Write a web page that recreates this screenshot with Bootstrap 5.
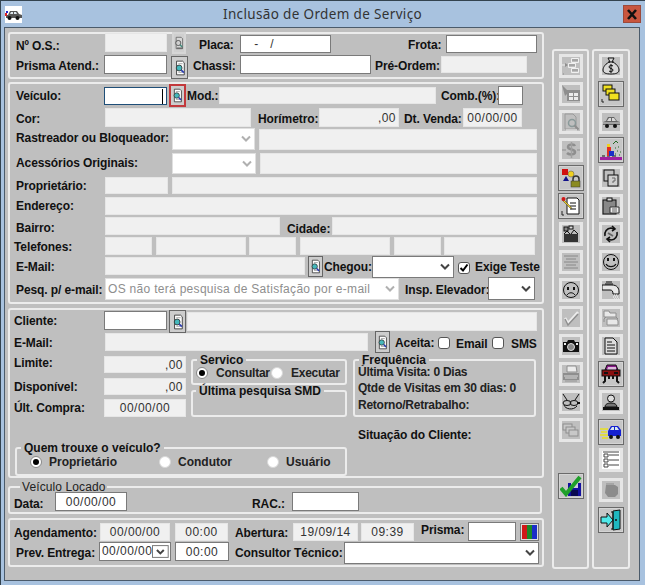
<!DOCTYPE html>
<html lang="pt-BR">
<head>
  <meta charset="UTF-8">
  <title>Inclusão de Ordem de Serviço</title>
  <meta name="viewport" content="width=device-width, initial-scale=1">
  <link href="https://cdn.jsdelivr.net/npm/bootstrap@5.3.0/dist/css/bootstrap.min.css" rel="stylesheet">
  <style>
    html, body { margin: 0; background: #a8c2df; }
    body { font-family: "Liberation Sans", Arial, sans-serif; font-size: 12px; color: #111; }

    /* janela */
    .janela { width: 645px; height: 585px; border-left: 1px solid #33434f; border-top: 1px solid #33434f; overflow: hidden; }
    .barra { height: 26px; padding: 0 4px 0 4px; }
    .titulo { font-family: "Noto Sans", "Open Sans", sans-serif; font-size: 13.5px; letter-spacing: .35px; color: #333; }
    .fecha { width: 18px; height: 18px; background: #c8563f; border: 1px solid #9c4a3c; border-radius: 0; padding: 0; line-height: 0; }
    .fecha:hover { background: #c8563f; border-color: #9c4a3c; }
    .cliente { width: 636px; height: 554px; margin-left: 3px; background: #bfbfbf; border: 1px solid #4b5b6b; padding: 4px 0 0 3px; }

    /* paineis e grupos */
    .painel { width: 536px; border: 2px solid #ececec; border-radius: 3px; }
    .grupo { border: 2px solid #ececec; border-radius: 3px; padding: 0; margin: 0; min-width: 0; }
    .grupo legend { float: none; width: auto; font-size: 12px; font-weight: 700; line-height: 12px; margin: 0 0 0 3px; padding: 0 3px; }
    .grupo legend.lg1 { margin-left: 1px; }
    .grupo legend.lg4 { margin-left: 4px; }
    .grupo legend.fino { font-weight: 400; margin-left: 6px; padding: 0 2px; letter-spacing: .1px; color: #222; }
    .pl4 { padding-left: 4px; }
    .pl6 { padding-left: 6px; }
    .pl3 { padding-left: 3px; }

    /* linhas do formulario */
    .lin > * { flex: none; }
    .rot { height: 18px; line-height: 20px; font-weight: 700; white-space: nowrap; letter-spacing: -.1px; }
    .txt { color: #222; font-weight: 700; line-height: 16px; white-space: nowrap; }
    .txt.baixo { line-height: 12px; }
    .aperta { letter-spacing: -.25px; }
    .campo { padding: 0 2px; font-size: 12px; line-height: 14px; border: 1px solid #7a7a7a; border-radius: 0; background: #fff; color: #333; box-shadow: none; letter-spacing: .45px; }
    .campo:disabled { background: #f0f0f0; border-color: #e6e6e6; opacity: 1; color: #333; }
    .centro { text-align: center; }
    .dir { text-align: right; }
    .foco { border-color: #1f4f78; background: #fff linear-gradient(#000, #000) no-repeat right 3px center / 1px 15px; }
    .sel { padding: 0 2px; font-size: 12px; border: 1px solid #7a7a7a; border-radius: 0; color: #888; background-color: #fff; background-position: right 3px center; background-size: 10px 8px; letter-spacing: .3px; box-shadow: none;
      background-image: url("data:image/svg+xml,%3csvg xmlns='http://www.w3.org/2000/svg' viewBox='0 0 10 8'%3e%3cpath fill='none' stroke='%23444' stroke-width='2' d='M1 1.5l4 4 4-4'/%3e%3c/svg%3e"); }
    .sel:disabled { background-color: #fff; border-color: #e0e0e0; color: #8e8e8e; opacity: 1;
      background-image: url("data:image/svg+xml,%3csvg xmlns='http://www.w3.org/2000/svg' viewBox='0 0 10 8'%3e%3cpath fill='none' stroke='%23b0b0b0' stroke-width='2' d='M1 1.5l4 4 4-4'/%3e%3c/svg%3e"); }
    .marc { margin: 0; flex: none; width: 12px; height: 12px; border: 1px solid #555; border-radius: 0; background-color: #fff; box-shadow: none; }
    .marc:checked[type=checkbox] { background-color: #fff; border-color: #555; background-size: 10px;
      --bs-form-check-bg-image: url("data:image/svg+xml,%3csvg xmlns='http://www.w3.org/2000/svg' viewBox='0 0 10 10'%3e%3cpath fill='none' stroke='%23000' stroke-width='2' d='M1.5 5l2.5 2.5 4.5-6'/%3e%3c/svg%3e"); }
    .marc[type=radio] { border: 1px solid #d8d8d8; border-radius: 50%; }
    .marc:checked[type=radio] { background-color: #fff; border-color: #888; background-size: 12px;
      --bs-form-check-bg-image: url("data:image/svg+xml,%3csvg xmlns='http://www.w3.org/2000/svg' viewBox='0 0 12 12'%3e%3ccircle cx='6' cy='6' r='3' fill='%23000'/%3e%3c/svg%3e"); }

    /* botoes pequenos */
    .lupa { padding: 0; border: 1px solid #666; border-radius: 0; background: #cdcdcd; line-height: 0; }
    .lupa:hover { background: #cdcdcd; border-color: #666; }
    .lupa.sem { border: 2px solid #d6d6d6; background: #cfcfcf; }
    .lupa.red { border: 2px solid #c2393c; }
    .cores { padding: 0; border: 1px solid #777; border-radius: 0; background: #ddd; line-height: 0; }
    .seta { margin: 2px 1px 2px auto; width: 17px; height: 13px; display: block; }
    .datacx { padding: 0 0 0 2px; font-size: 12px; line-height: 17px; border: 1px solid #7a7a7a; background: #fff; color: #333; letter-spacing: .45px; }

    /* barras de ferramentas */
    .ferrs { margin: 17px 0 0 8px; }
    .coluna { height: 520px; border: 2px solid #ececec; border-radius: 3px; padding-top: 1px; }
    .vaga { height: 28px; }
    .ferr { width: 24px; height: 24px; padding: 0; border: 3px solid #e6e6e6; border-radius: 0; background: #bfbfbf; line-height: 0; }
    .ferr:hover { background: #bfbfbf; border-color: #e6e6e6; }
    .ferr.ativo { width: 26px; height: 26px; border: 1px solid #6a6a6a; background: #c6c6c6; box-shadow: inset 0 0 0 1px #d4d4d4; }
    .ferr.ativo:hover { border-color: #6a6a6a; background: #c6c6c6; }

    /* medidas */
    .w12{width:12px}.w14{width:14px}.w15{width:15px}.w17{width:17px}.w19{width:19px}.w25{width:25px}.w32{width:32px}.w36{width:36px}.w37{width:37px}.w38{width:38px}.w40{width:40px}.w41{width:41px}.w43{width:43px}.w45{width:45px}.w47{width:47px}.w48{width:48px}.w53{width:53px}.w54{width:54px}.w55{width:55px}.w57{width:57px}.w58{width:58px}.w59{width:59px}.w60{width:60px}.w61{width:61px}.w62{width:62px}.w63{width:63px}.w65{width:65px}.w66{width:66px}.w67{width:67px}.w70{width:70px}.w72{width:72px}.w80{width:80px}.w82{width:82px}.w83{width:83px}.w84{width:84px}.w86{width:86px}.w88{width:88px}.w89{width:89px}.w90{width:90px}.w91{width:91px}.w109{width:109px}.w110{width:110px}.w131{width:131px}.w146{width:146px}.w156{width:156px}.w175{width:175px}.w177{width:177px}.w183{width:183px}.w195{width:195px}.w200{width:200px}.w205{width:205px}.w217{width:217px}.w263{width:263px}.w277{width:277px}.w278{width:278px}.w294{width:294px}.w332{width:332px}.w350{width:350px}.w365{width:365px}.w432{width:432px}.w534{width:534px}
    .ml1{margin-left:1px}.ml2{margin-left:2px}.ml3{margin-left:3px}.ml4{margin-left:4px}.ml5{margin-left:5px}.ml6{margin-left:6px}.ml7{margin-left:7px}.ml8{margin-left:8px}.ml11{margin-left:11px}.ml13{margin-left:13px}.ml77{margin-left:77px}.ml125{margin-left:125px}.mln2{margin-left:-2px}
    .t1{margin-top:1px}.t2{margin-top:2px}.t3{margin-top:3px}.t4{margin-top:4px}.t5{margin-top:5px}.t8{margin-top:8px}.t25{margin-top:25px}.tn1{margin-top:-1px}.tn2{margin-top:-2px}.tn3{margin-top:-3px}
    .a16{height:16px}.a17{height:17px}.a18{height:18px}.a19{height:19px}.a20{height:20px}.a21{height:21px}.a22{height:22px}.a23{height:23px}.a24{height:24px}.a25{height:25px}.a31{height:31px}.a32{height:32px}.a33{height:33px}.a34{height:34px}.a59{height:59px}.a61{height:61px}.a63{height:63px}
    .mt3p{margin-top:3px}.mt4p{margin-top:4px}
  </style>
</head>
<body>

<svg width="0" height="0" class="position-absolute">
  <symbol id="lupa" viewBox="0 0 14 20">
    <path d="M3 2h7l2 2v14H3z" fill="#fff" stroke="#333"/>
    <path d="M5 5h5M5 15h5" stroke="#999"/>
    <circle cx="6" cy="10" r="3.400" fill="#45b8bc" stroke="#333"/>
    <path d="M8.500 12.500l3 3" stroke="#2a3cb0" stroke-width="2"/>
  </symbol>
  <symbol id="lupa0" viewBox="0 0 14 20">
    <path d="M3 2h7l2 2v14H3z" fill="#d8d8d8" stroke="#555"/>
    <circle cx="6" cy="10" r="3.600" fill="#cfcfcf" stroke="#333"/>
    <path d="M8.500 12.500l3 3" stroke="#3f8a7a" stroke-width="2"/>
    <path d="M4 17h8" stroke="#333"/>
  </symbol>
</svg>

<div class="janela">
  <div class="barra d-flex align-items-center">
    <svg width="17" height="17" viewBox="0 0 17 17">
      <rect width="17" height="17" fill="#fff"/>
      <path d="M3 9l2-4h7l2 3 3 1v3H1V9z" fill="#555"/>
      <path d="M6 6h2v2H5zM9 6h2l1 2H9z" fill="#dfe8ee"/>
      <rect x="0" y="7" width="2" height="3" fill="#d22"/>
      <rect x="1" y="5" width="2" height="2" fill="#22c"/>
      <circle cx="4.500" cy="12" r="2" fill="#111"/><circle cx="12.500" cy="12" r="2" fill="#111"/>
    </svg>
    <div class="titulo flex-grow-1 text-center">Inclusão de Ordem de Serviço</div>
    <button class="btn fecha d-flex align-items-center justify-content-center" aria-label="Fechar">
      <svg width="12" height="11" viewBox="0 0 12 11"><path d="M2 1l8 9M10 1l-8 9" stroke="#111" stroke-width="2.600"/></svg>
    </button>
  </div>

  <div class="cliente d-flex align-items-start">
    <div>
      <!-- identificacao da O.S. -->
      <div class="painel pl6">
        <div class="lin d-flex align-items-start a21">
          <span class="rot w89 t2">Nº O.S.:</span>
          <input class="form-control campo w62 a19 tn1" disabled>
          <button class="btn lupa sem ml5 w14 a22 tn2"><svg width="10" height="18"><use href="#lupa0"/></svg></button>
          <span class="rot ml13 w41 t1">Placa:</span>
          <input class="form-control campo w91 a18 t1" value="   -   /">
          <span class="rot ml77 w38 t1">Frota:</span>
          <input class="form-control campo w91 a18 t1">
        </div>
        <div class="lin d-flex align-items-start a22">
          <span class="rot w88 t1">Prisma Atend.:</span>
          <input class="form-control campo w63 a19">
          <button class="btn lupa ml4 w17 a23 t1"><svg width="12" height="18"><use href="#lupa"/></svg></button>
          <span class="rot ml5 w47 t1">Chassi:</span>
          <input class="form-control campo w131 a19">
          <span class="rot ml4 w66 t1">Pré-Ordem:</span>
          <input class="form-control campo w86 a17 t1" disabled>
        </div>
      </div>

      <!-- veiculo -->
      <div class="painel pl6 mt3p">
        <div class="lin d-flex align-items-start a24">
          <span class="rot w88 t2">Veículo:</span>
          <input class="form-control campo foco w63 a18 t3">
          <button class="btn lupa red ml2 w17 a23"><svg width="11" height="17"><use href="#lupa"/></svg></button>
          <span class="rot ml1 w32 t2">Mod.:</span>
          <input class="form-control campo w217 a17 t3" disabled>
          <span class="rot ml5 w57 t2">Comb.(%):</span>
          <input class="form-control campo w25 a19 t2">
        </div>
        <div class="lin d-flex align-items-start a20">
          <span class="rot w89 t1">Cor:</span>
          <input class="form-control campo w146 a19" disabled>
          <span class="rot ml7 w61 t1">Horímetro:</span>
          <input class="form-control campo dir w80 a19" disabled value=",00">
          <span class="rot ml5 w59 t1">Dt. Venda:</span>
          <input class="form-control campo centro w59 a19" disabled value="00/00/00">
        </div>
        <div class="lin d-flex align-items-start a25">
          <span class="rot w156">Rastreador ou Bloqueador:</span>
          <select class="form-select sel w83 a22" disabled></select>
          <input class="form-control campo ml4 w278 a21 t1" disabled>
        </div>
        <div class="lin d-flex align-items-start a24">
          <span class="rot w156">Acessórios Originais:</span>
          <select class="form-select sel w84 a21" disabled></select>
          <input class="form-control campo ml4 w277 a21" disabled>
        </div>
        <div class="lin d-flex align-items-start a20">
          <span class="rot w89 tn1">Proprietário:</span>
          <input class="form-control campo w63 a17" disabled>
          <input class="form-control campo ml4 w365 a17" disabled>
        </div>
        <div class="lin d-flex align-items-start a20">
          <span class="rot w89 tn1">Endereço:</span>
          <input class="form-control campo w432 a18" disabled>
        </div>
        <div class="lin d-flex align-items-start a20">
          <span class="rot w89 t1">Bairro:</span>
          <input class="form-control campo w175 a18" disabled>
          <span class="rot ml7 w45 t2">Cidade:</span>
          <input class="form-control campo w205 a18" disabled>
        </div>
        <div class="lin d-flex align-items-start a20">
          <span class="rot w91 mln2">Telefones:</span>
          <input class="form-control campo w47 a18" disabled>
          <input class="form-control campo ml4 w90 a18" disabled>
          <input class="form-control campo ml3 w47 a18" disabled>
          <input class="form-control campo ml4 w90 a18" disabled>
          <input class="form-control campo ml4 w47 a18" disabled>
          <input class="form-control campo ml3 w91 a18" disabled>
        </div>
        <div class="lin d-flex align-items-start a21">
          <span class="rot w89">E-Mail:</span>
          <input class="form-control campo w200 a18" disabled>
          <button class="btn lupa ml3 w15 a21 tn1"><svg width="11" height="17"><use href="#lupa"/></svg></button>
          <span class="rot ml1 w48">Chegou:</span>
          <select class="form-select sel w82 a22 tn1"></select>
          <input class="form-check-input marc w12 ml4 t5" type="checkbox" checked>
          <span class="rot ml5">Exige Teste</span>
        </div>
        <div class="lin d-flex align-items-start a24">
          <span class="rot w89 t2">Pesq. p/ e-mail:</span>
          <select class="form-select sel w294 a22" disabled><option>OS não terá pesquisa de Satisfação por e-mail</option></select>
          <span class="rot ml6 w83 t2">Insp. Elevador:</span>
          <select class="form-select sel w47 a23 tn1"></select>
        </div>
      </div>

      <!-- cliente -->
      <div class="painel pl4 mt4p">
        <div class="lin d-flex align-items-start a23">
          <span class="rot w90 t1">Cliente:</span>
          <input class="form-control campo w63 a19 t1">
          <button class="btn lupa ml2 w17 a23"><svg width="12" height="18"><use href="#lupa"/></svg></button>
          <input class="form-control campo ml1 w350 a19 t2" disabled>
        </div>
        <div class="lin d-flex align-items-start a23">
          <span class="rot w91">E-Mail:</span>
          <input class="form-control campo w263 a18" disabled>
          <button class="btn lupa ml7 w15 a22 tn2"><svg width="11" height="17"><use href="#lupa"/></svg></button>
          <span class="rot ml5 w43">Aceita:</span>
          <input class="form-check-input marc t4" type="checkbox">
          <span class="rot ml6 w36 t1">Email</span>
          <input class="form-check-input marc t4" type="checkbox">
          <span class="rot ml7 t1">SMS</span>
        </div>
        <div class="lin d-flex align-items-start a61">
          <div class="w177">
            <div class="lin d-flex align-items-start a22">
              <span class="rot w90 tn3">Limite:</span>
              <input class="form-control campo dir w82 a17" disabled value=",00">
            </div>
            <div class="lin d-flex align-items-start a21">
              <span class="rot w90 tn1">Disponível:</span>
              <input class="form-control campo dir w82 a17" disabled value=",00">
            </div>
            <div class="lin d-flex align-items-start">
              <span class="rot w90 tn1">Últ. Compra:</span>
              <input class="form-control campo centro w82 a18" disabled value="00/00/00">
            </div>
          </div>
          <div class="w156 tn2">
            <fieldset class="grupo a31 pl3">
              <legend class="lg1">Servico</legend>
              <div class="lin d-flex align-items-center a16 tn1">
                <input class="form-check-input marc" type="radio" name="sv" checked>
                <span class="txt aperta ml8 w55">Consultar</span>
                <input class="form-check-input marc" type="radio" name="sv">
                <span class="txt aperta ml8">Executar</span>
              </div>
            </fieldset>
            <fieldset class="grupo a32">
              <legend>Última pesquisa SMD</legend>
            </fieldset>
          </div>
          <fieldset class="grupo a63 w183 ml6 tn2 pl3">
            <legend class="lg1">Frequência</legend>
            <div class="txt baixo aperta">Última Visita: 0 Dias</div>
            <div class="txt baixo aperta t4">Qtde de Visitas em 30 dias: 0</div>
            <div class="txt baixo aperta t5">Retorno/Retrabalho:</div>
          </fieldset>
        </div>
        <div class="lin d-flex align-items-start a59">
          <fieldset class="grupo a34 w332 ml1 t25">
            <legend class="lg4">Quem trouxe o veículo?</legend>
            <div class="lin d-flex align-items-center a16">
              <input class="form-check-input marc ml13" type="radio" name="qt" checked>
              <span class="txt ml7 w110">Proprietário</span>
              <input class="form-check-input marc" type="radio" name="qt">
              <span class="txt ml7 w89">Condutor</span>
              <input class="form-check-input marc" type="radio" name="qt">
              <span class="txt ml7">Usuário</span>
            </div>
          </fieldset>
          <span class="rot ml11 t8">Situação do Cliente:</span>
        </div>
      </div>

      <!-- veiculo locado -->
      <fieldset class="grupo w534 a33 mt3p pl4">
        <legend class="fino">Veículo Locado</legend>
        <div class="lin d-flex align-items-start">
          <span class="rot w41 t1">Data:</span>
          <input class="form-control campo centro w72 a19 tn1" value="00/00/00">
          <span class="rot ml125 w40 t1">RAC.:</span>
          <input class="form-control campo w67 a19 tn1">
        </div>
      </fieldset>

      <!-- datas -->
      <div class="painel pl4 mt4p">
        <div class="lin d-flex align-items-start a22">
          <span class="rot w86 t3">Agendamento:</span>
          <input class="form-control campo centro w70 a18 t3" disabled value="00/00/00">
          <input class="form-control campo centro ml5 w53 a18 t3" disabled value="00:00">
          <span class="rot ml7 w58 t3">Abertura:</span>
          <input class="form-control campo centro w65 a18 t3" disabled value="19/09/14">
          <input class="form-control campo centro ml3 w53 a18 t3" disabled value="09:39">
          <span class="rot ml7 w47">Prisma:</span>
          <input class="form-control campo w48 a19 t2">
          <button class="btn cores ml4 w19 a18 t3" aria-label="Cor">
            <svg width="17" height="14" viewBox="0 0 17 14"><rect x="1" width="5" height="14" fill="#d01818"/><rect x="6" width="5" height="14" fill="#1a8a2a"/><rect x="11" width="5" height="14" fill="#1a2ec8"/></svg>
          </button>
        </div>
        <div class="lin d-flex align-items-start a23">
          <span class="rot ml2 w83 t1">Prev. Entrega:</span>
          <div class="datacx w72 a19 d-flex">
            <span>00/00/00</span>
            <svg class="seta" viewBox="0 0 17 13"><rect x=".5" y=".5" width="16" height="12" fill="#fff" stroke="#777"/><path d="M5 5l3.500 3.500L12 5" fill="none" stroke="#444" stroke-width="2"/></svg>
          </div>
          <input class="form-control campo centro ml4 w54 a19" value="00:00">
          <span class="rot ml6 w109 t1">Consultor Técnico:</span>
          <select class="form-select sel w195 a22"></select>
        </div>
      </div>
    </div>

    <div class="ferrs d-flex">
      <!-- coluna 1 -->
      <div class="coluna w37 d-flex flex-column align-items-center">
        <div class="vaga d-flex align-items-center justify-content-center"><button class="btn ferr"><svg width="18" height="18" viewBox="0 0 18 18"><g fill="none" stroke="#f0f0f0"><path d="M9.500 1.500h7v4h-7zM6.500 6.500h7v4h-7zM9.500 11.500h7v4h-7z"/></g><path d="M10 3h6M7 8h6M10 13h6" stroke="#8e8e8e"/><path d="M0 8h3" stroke="#f0f0f0"/><path d="M3 6l3 2-3 2z" fill="#8e8e8e"/><path d="M1 17h1" stroke="#8e8e8e"/></svg></button></div>
        <div class="vaga d-flex align-items-center justify-content-center"><button class="btn ferr"><svg width="18" height="18" viewBox="0 0 18 18"><path d="M0 0l7 7-4 4z" fill="#8e8e8e"/><rect x="5" y="5" width="13" height="11" fill="#8e8e8e"/><path d="M7 8h4v3H7zM12 8h4v3h-4zM7 12h4v3H7zM12 12h4v3h-4z" fill="#ececec"/></svg></button></div>
        <div class="vaga d-flex align-items-center justify-content-center"><button class="btn ferr"><svg width="18" height="18" viewBox="0 0 18 18"><path d="M3 1h8l3 3v12H3z" fill="none" stroke="#9a9a9a"/><path d="M4 17h11" stroke="#ececec"/><circle cx="10" cy="10" r="3.500" fill="none" stroke="#8a9a9a" stroke-width="1.500"/><path d="M12.500 12.500l4 4" stroke="#8e8e8e" stroke-width="2"/></svg></button></div>
        <div class="vaga d-flex align-items-center justify-content-center"><button class="btn ferr"><svg width="18" height="18" viewBox="0 0 18 18"><path d="M13 5c-1-2-7-2-7 1s7 2 7 5-6 3-8 1" fill="none" stroke="#8e8e8e" stroke-width="2.500"/><path d="M9.500 1v16M0 9h4M15 9h3" stroke="#a0a0a0" stroke-width="1.500"/></svg></button></div>
        <div class="vaga d-flex align-items-center justify-content-center"><button class="btn ferr ativo"><svg width="20" height="20" viewBox="0 0 20 20"><rect x="1" y="1" width="6" height="6" fill="#d01010"/><path d="M2 13l3-5 3 5z" fill="#10108a"/><circle cx="10" cy="6" r="3" fill="#f0d020" stroke="#555" stroke-width=".5"/><path d="M12 13v-2a3 3 0 016 0v2" fill="none" stroke="#333" stroke-width="1.500"/><rect x="10" y="13" width="9" height="6" fill="#8a8a20" stroke="#333" stroke-width=".5"/></svg></button></div>
        <div class="vaga d-flex align-items-center justify-content-center"><button class="btn ferr ativo"><svg width="20" height="20" viewBox="0 0 20 20"><path d="M6 2h10l2 2v14H6z" fill="#fff" stroke="#111"/><path d="M9 7h6M9 10h6M9 13h6" stroke="#111"/><path d="M2 3l8 8 1 2-2-1-8-8z" fill="#f0d020" stroke="#333" stroke-width=".5"/><circle cx="2.500" cy="3" r="2" fill="#d01818"/><path d="M1 15v4h2" fill="none" stroke="#222"/></svg></button></div>
        <div class="vaga d-flex align-items-center justify-content-center"><button class="btn ferr"><svg width="18" height="18" viewBox="0 0 18 18"><rect x="2" y="9" width="14" height="8" fill="#333"/><path d="M2 9l3-3 3 3M9 9l3-4 4 4" fill="#bbb" stroke="#111"/><rect x="2" y="2" width="4" height="4" fill="#888" stroke="#111"/><rect x="7" y="1" width="4" height="3" fill="#ddd" stroke="#111"/></svg></button></div>
        <div class="vaga d-flex align-items-center justify-content-center"><button class="btn ferr"><svg width="18" height="18" viewBox="0 0 18 18"><path d="M2 3h14M4 6h10M2 9h14M4 12h10M2 15h14" stroke="#888"/></svg></button></div>
        <div class="vaga d-flex align-items-center justify-content-center"><button class="btn ferr"><svg width="18" height="18" viewBox="0 0 18 18"><circle cx="9" cy="9" r="7.500" fill="none" stroke="#111"/><rect x="5" y="6" width="2" height="3" fill="#111"/><rect x="11" y="6" width="2" height="3" fill="#111"/><path d="M5 14c2-3 6-3 8 0" fill="none" stroke="#111"/></svg></button></div>
        <div class="vaga d-flex align-items-center justify-content-center"><button class="btn ferr"><svg width="18" height="18" viewBox="0 0 18 18"><path d="M3 9l3 5L16 3" fill="none" stroke="#ececec" stroke-width="2.500"/><path d="M3 10l3 6L16 5" fill="none" stroke="#8e8e8e" stroke-width="1.500"/></svg></button></div>
        <div class="vaga d-flex align-items-center justify-content-center"><button class="btn ferr"><svg width="18" height="18" viewBox="0 0 18 18"><path d="M1 5h4l1-2h6l1 2h4v10H1z" fill="#111"/><circle cx="9" cy="10" r="3.500" fill="#888" stroke="#ddd"/><rect x="2" y="6" width="2" height="2" fill="#eee"/><rect x="14" y="6" width="2" height="2" fill="#eee"/></svg></button></div>
        <div class="vaga d-flex align-items-center justify-content-center"><button class="btn ferr"><svg width="18" height="18" viewBox="0 0 18 18"><path d="M5 1h9l1 6H5z" fill="#ececec" stroke="#8e8e8e"/><path d="M1 8h16v7H1z" fill="#8e8e8e"/><path d="M2 11h14M3 13h12" stroke="#d8d8d8"/><path d="M3 15h12v2H3z" fill="#aaa"/></svg></button></div>
        <div class="vaga d-flex align-items-center justify-content-center"><button class="btn ferr"><svg width="18" height="18" viewBox="0 0 18 18"><g fill="none" stroke="#111"><path d="M1 1l4 6M17 1l-4 6"/><ellipse cx="5" cy="10" rx="4" ry="2.500"/><ellipse cx="12" cy="10" rx="4" ry="2.500"/><path d="M2 12c1 4 9 6 13 1"/></g><path d="M15 10h3" stroke="#111" stroke-width="2"/></svg></button></div>
        <div class="vaga d-flex align-items-center justify-content-center"><button class="btn ferr"><svg width="18" height="18" viewBox="0 0 18 18"><g fill="#c8c8c8" stroke="#8e8e8e"><rect x="1" y="3" width="9" height="6"/><rect x="4" y="6" width="9" height="6"/><rect x="7" y="9" width="9" height="6"/></g></svg></button></div>
        <div class="vaga"></div>
        <div class="vaga d-flex align-items-center justify-content-center"><button class="btn ferr ativo"><svg width="22" height="22" viewBox="0 0 22 22"><path d="M8 8h13v13H8z" fill="#1410a0"/><rect x="11" y="8" width="7" height="5" fill="#ccd"/><rect x="11" y="15" width="7" height="6" fill="#0a0a50"/><path d="M1 13l5 6L20 2" fill="none" stroke="#1fa02a" stroke-width="4"/></svg></button></div>
      </div>

      <!-- coluna 2 -->
      <div class="coluna w38 ml3 d-flex flex-column align-items-center">
        <div class="vaga d-flex align-items-center justify-content-center"><button class="btn ferr"><svg width="18" height="18" viewBox="0 0 18 18"><path d="M6 1h6l-2 4c4 1 7 5 7 8 0 3-3 4-8 4s-8-1-8-4c0-3 3-7 7-8z" fill="#d8d8d8" stroke="#111"/><path d="M6 5h6" stroke="#111"/><path d="M11 9c-1-1-4-1-4 1s4 1 4 3-3 2-4 1M9 7v9" fill="none" stroke="#111"/></svg></button></div>
        <div class="vaga d-flex align-items-center justify-content-center"><button class="btn ferr ativo"><svg width="20" height="20" viewBox="0 0 20 20"><g fill="#f0e020" stroke="#111"><rect x="2" y="1" width="9" height="6"/><rect x="5" y="5" width="9" height="6"/><rect x="8" y="9" width="10" height="7"/></g><path d="M1 15v3h2" fill="none" stroke="#222"/></svg></button></div>
        <div class="vaga d-flex align-items-center justify-content-center"><button class="btn ferr"><svg width="18" height="18" viewBox="0 0 18 18"><path d="M1 12V9l3-1 2-4h6l3 4 3 1v3z" fill="#666"/><path d="M7 5h2v3H5zM10 5h2l2 3h-4z" fill="#d8d8d8"/><path d="M0 10h18" stroke="#ddd"/><circle cx="5" cy="13" r="2" fill="#111"/><circle cx="13" cy="13" r="2" fill="#111"/></svg></button></div>
        <div class="vaga d-flex align-items-center justify-content-center"><button class="btn ferr ativo"><svg width="22" height="22" viewBox="0 0 22 22"><rect x="0" y="18" width="22" height="3" fill="#a020a0"/><path d="M2 17h3M7 17h3M12 17h4" stroke="#111"/><rect x="7" y="8" width="4" height="9" fill="#e03020"/><rect x="7" y="5" width="3" height="3" fill="#f0d020"/><rect x="9" y="12" width="5" height="5" fill="#1a2ec8"/><path d="M13 5l3-3 2 2M15 9h1M18 8h1M17 12h1M20 13h1M15 15h1M19 16h1" stroke="#262" fill="none"/></svg></button></div>
        <div class="vaga d-flex align-items-center justify-content-center"><button class="btn ferr"><svg width="18" height="18" viewBox="0 0 18 18"><rect x="2" y="1" width="10" height="11" fill="#bfbfbf" stroke="#111"/><rect x="6" y="6" width="10" height="11" fill="#d0d0d0" stroke="#111"/><path d="M10 9h3v3h-2v2" fill="none" stroke="#666"/></svg></button></div>
        <div class="vaga d-flex align-items-center justify-content-center"><button class="btn ferr"><svg width="18" height="18" viewBox="0 0 18 18"><rect x="1" y="3" width="13" height="14" fill="#888" stroke="#111"/><rect x="5" y="1" width="5" height="3" fill="#ddd" stroke="#111"/><path d="M8 10h9v6H8z" fill="#eee" stroke="#333"/><path d="M10 12h5M10 14h5" stroke="#666"/></svg></button></div>
        <div class="vaga d-flex align-items-center justify-content-center"><button class="btn ferr"><svg width="18" height="18" viewBox="0 0 18 18"><g fill="none" stroke="#111" stroke-width="1.600"><path d="M3 11a6.500 6.500 0 016-8l3 1"/><path d="M15 7a6.500 6.500 0 01-6 8l-3-1"/><path d="M10 1l3 3-3 2M8 17l-3-3 3-2"/></g><path d="M6 8l5 3" stroke="#666" stroke-width="2"/></svg></button></div>
        <div class="vaga d-flex align-items-center justify-content-center"><button class="btn ferr"><svg width="18" height="18" viewBox="0 0 18 18"><circle cx="9" cy="9" r="7.500" fill="none" stroke="#111"/><rect x="5" y="5" width="2" height="3" fill="#111"/><rect x="11" y="5" width="2" height="3" fill="#111"/><path d="M4 11c2 3.500 8 3.500 10 0" fill="none" stroke="#111" stroke-width="1.200"/></svg></button></div>
        <div class="vaga d-flex align-items-center justify-content-center"><button class="btn ferr"><svg width="18" height="18" viewBox="0 0 18 18"><path d="M0 4h10c5 0 7 3 7 7v2h-6c0-3-1-4-3-4H0z" fill="#e8e8e8" stroke="#111"/><path d="M4 1h6M3 3h8" stroke="#111"/><path d="M12 14h4M11 16h6M12 18h5" stroke="#fff" stroke-dasharray="1 1"/></svg></button></div>
        <div class="vaga d-flex align-items-center justify-content-center"><button class="btn ferr"><svg width="18" height="18" viewBox="0 0 18 18"><path d="M2 2h5l1 2h6v4H2zM5 10h10l1 2v4H5z" fill="#e8e8e8" stroke="#8e8e8e"/><path d="M14 8l2 2M4 8L2 10v3" fill="none" stroke="#8e8e8e"/></svg></button></div>
        <div class="vaga d-flex align-items-center justify-content-center"><button class="btn ferr"><svg width="18" height="18" viewBox="0 0 18 18"><path d="M3 1h8l4 4v12H3z" fill="#ddd" stroke="#111"/><path d="M5 5h5M5 8h8M5 11h8M5 14h8" stroke="#111"/></svg></button></div>
        <div class="vaga d-flex align-items-center justify-content-center"><button class="btn ferr ativo"><svg width="22" height="22" viewBox="0 0 22 22"><path d="M5 7l2-5h9l2 5z" fill="#8a1a8a" stroke="#111"/><path d="M7 7h9v-3H8z" fill="#dcb8dc"/><rect x="2" y="7" width="18" height="6" fill="#8a1010" stroke="#111"/><rect x="4" y="9" width="4" height="2" fill="#111"/><rect x="14" y="9" width="4" height="2" fill="#111"/><path d="M5 13v5l-2 2M17 13v5l2 2M9 13v3M13 13v3" stroke="#111" stroke-width="2" fill="none"/></svg></button></div>
        <div class="vaga d-flex align-items-center justify-content-center"><button class="btn ferr"><svg width="18" height="18" viewBox="0 0 18 18"><circle cx="9" cy="5.500" r="3.500" fill="#ddd" stroke="#111"/><path d="M3 14c0-3 3-4 6-4s6 1 6 4z" fill="#777" stroke="#111"/><rect x="1" y="14" width="16" height="3" fill="#111"/></svg></button></div>
        <div class="vaga t2 d-flex align-items-center justify-content-center"><button class="btn ferr ativo"><svg width="22" height="22" viewBox="0 0 22 22"><path d="M0 8h8M1 11h6M0 14h8M2 17h6" stroke="#e8e020" stroke-width="1.500"/><path d="M8 10l3-5h7l3 4v6H8z" fill="#1420d0"/><path d="M12 6h2v3h-4zM15 6h2l2 3h-4z" fill="#d8e8f0"/><circle cx="11" cy="16" r="2" fill="#111"/><circle cx="18" cy="16" r="2" fill="#111"/></svg></button></div>
        <div class="vaga d-flex align-items-center justify-content-center"><button class="btn ferr"><svg width="18" height="18" viewBox="0 0 18 18"><rect width="18" height="18" fill="#fff"/><g fill="none" stroke="#444"><path d="M1 1h16"/><path d="M2 3h4v3H2zM2 8h4v3H2zM2 13h4v3H2z"/><path d="M7 4h10M7 9h10M7 14h10"/></g></svg></button></div>
        <div class="vaga t2 d-flex align-items-center justify-content-center"><button class="btn ferr"><svg width="18" height="18" viewBox="0 0 18 18"><path d="M4 4h9l3 2v7l-3 3H6l-3-4z" fill="#8c8c8c"/><path d="M5 2v2M7 2v2M9 2v2M11 2v2" stroke="#8c8c8c"/></svg></button></div>
        <div class="vaga t2 d-flex align-items-center justify-content-center"><button class="btn ferr ativo"><svg width="22" height="22" viewBox="0 0 22 22"><path d="M13 2l7-1v19l-7 1z" fill="#1fb8c0" stroke="#111"/><path d="M11 3h2v17h-2" fill="none" stroke="#111"/><path d="M1 8h6V4l6 7-6 7v-4H1z" fill="#50e8e8" stroke="#111"/><circle cx="16" cy="11" r="1" fill="#111"/></svg></button></div>
      </div>
    </div>
  </div>
</div>

</body>
</html>
